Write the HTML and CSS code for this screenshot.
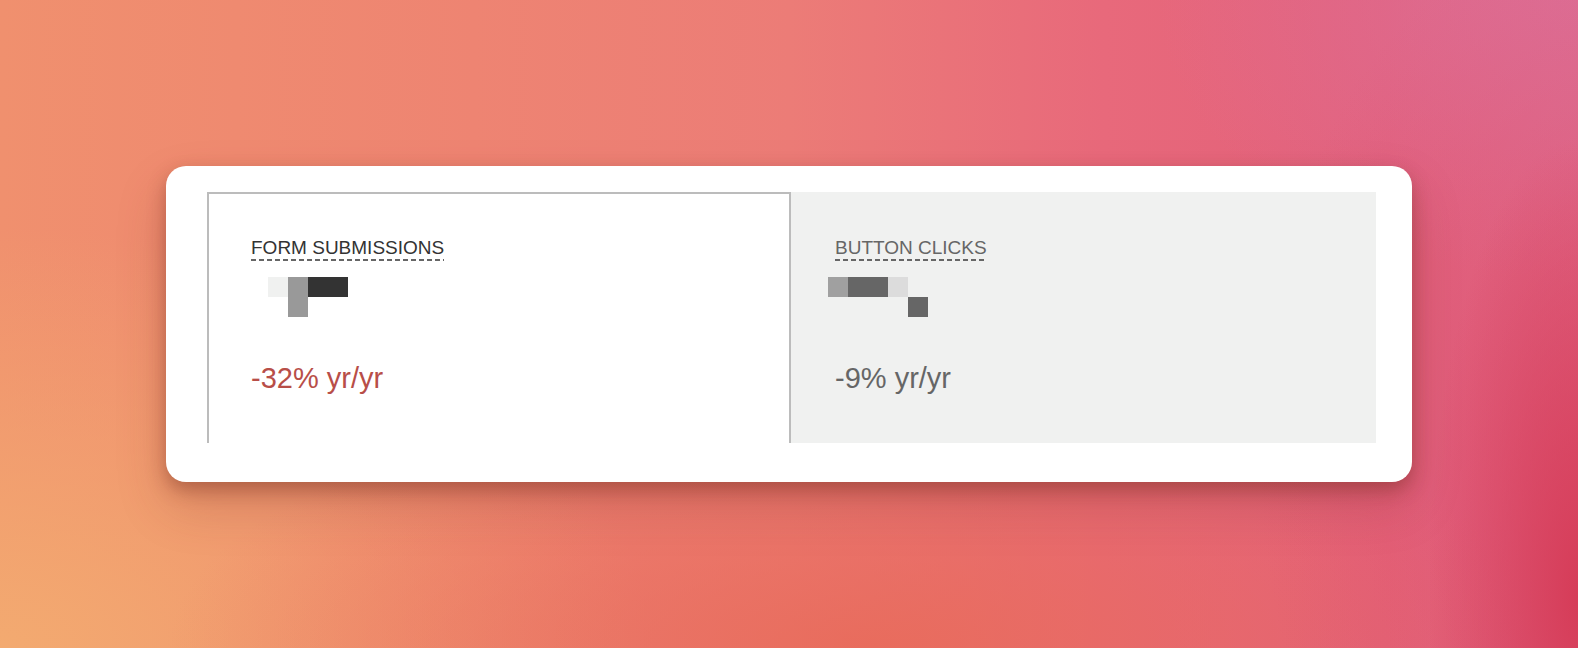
FILE: index.html
```html
<!DOCTYPE html>
<html lang="en">
<head>
<meta charset="utf-8">
<title>Metrics</title>
<link rel="stylesheet" href="styles.css">
</head>
<body>
<main class="stage">
  <section class="card">
    <div class="metrics">
      <div class="metric metric--active">
        <div class="label">FORM SUBMISSIONS</div>
        <div class="pixels pixels--left">
          <div class="px-row">
            <span class="px c-light"></span><span class="px c-mid"></span><span class="px c-dark"></span><span class="px c-dark"></span>
          </div>
          <div class="px-row">
            <span class="px c-none"></span><span class="px c-mid"></span>
          </div>
        </div>
        <div class="value value--down">-32% yr/yr</div>
      </div>
      <div class="metric metric--muted">
        <div class="label">BUTTON CLICKS</div>
        <div class="pixels pixels--right">
          <div class="px-row">
            <span class="px c-grey"></span><span class="px c-steel"></span><span class="px c-steel"></span><span class="px c-pale"></span>
          </div>
          <div class="px-row">
            <span class="px c-none"></span><span class="px c-none"></span><span class="px c-none"></span><span class="px c-none"></span><span class="px c-steel"></span>
          </div>
        </div>
        <div class="value">-9% yr/yr</div>
      </div>
    </div>
  </section>
</main>
</body>
</html>
```
FILE: styles.css
```css
* { box-sizing: border-box; }

html, body {
  margin: 0;
  padding: 0;
  width: 1578px;
  height: 648px;
  overflow: hidden;
}

body {
  font-family: "Liberation Sans", Arial, sans-serif;
  background:
    radial-gradient(ellipse 150px 460px at 100% 92%, rgba(214, 60, 88, 1), rgba(214, 60, 88, 0) 100%),
    radial-gradient(ellipse 320px 520px at 100% 70%, rgba(222, 80, 110, 0.55), rgba(222, 80, 110, 0) 100%),
    radial-gradient(ellipse 700px 260px at 55% 100%, rgba(232, 106, 88, 0.85), rgba(232, 106, 88, 0) 100%),
    radial-gradient(ellipse 650px 420px at 0% 100%, rgba(243, 170, 112, 1), rgba(243, 170, 112, 0) 100%),
    radial-gradient(ellipse 420px 280px at 100% 0%, rgba(220, 110, 150, 0.9), rgba(220, 110, 150, 0) 100%),
    linear-gradient(90deg, #f0906e 0%, #ee8472 30%, #ec7c77 50%, #e8697b 70%, #e3617c 88%, #df6a8a 100%);
}

.stage {
  padding: 166px 166px 0 166px;
}

.card {
  width: 1246px;
  height: 316px;
  background: #fff;
  border-radius: 20px;
  padding: 26px 36px 39px 41px;
  box-shadow: 0 8px 18px rgba(110, 40, 25, 0.38), 0 24px 50px rgba(120, 45, 35, 0.22);
}

.metrics {
  display: grid;
  grid-template-columns: 584px 1fr;
  height: 100%;
}

.metric {
  padding: 43px 0 0 42px;
}

.metric--active {
  border-top: 2px solid #bcbcbc;
  border-left: 2px solid #bcbcbc;
  border-right: 2px solid #bcbcbc;
}

.metric--muted {
  background: #f0f1f0;
  padding-top: 45px;
  padding-left: 44px;
}

.label {
  display: inline-block;
  font-size: 19px;
  line-height: 22px;
  color: #333;
  padding-bottom: 2px;
  background-image: linear-gradient(90deg, #666 0 5px, transparent 5px 8px);
  background-size: 8px 2px;
  background-repeat: repeat-x;
  background-position: 0 100%;
}

.metric--muted .label {
  color: #666;
}

.pixels {
  margin-top: 16px;
}

.pixels--left { margin-left: 17px; }
.pixels--right { margin-left: -7px; }

.px-row {
  display: flex;
  height: 20px;
}

.px {
  width: 20px;
  height: 20px;
}

.c-none { background: transparent; }
.c-light { background: #f0f1f0; }
.c-mid { background: #999; }
.c-dark { background: #333; }
.c-grey { background: #a0a0a0; }
.c-steel { background: #666; }
.c-pale { background: #dcdcdc; }

.value {
  margin-top: 44px;
  font-size: 29px;
  line-height: 34px;
  color: #666;
}

.value--down {
  color: #b84e48;
}
```
